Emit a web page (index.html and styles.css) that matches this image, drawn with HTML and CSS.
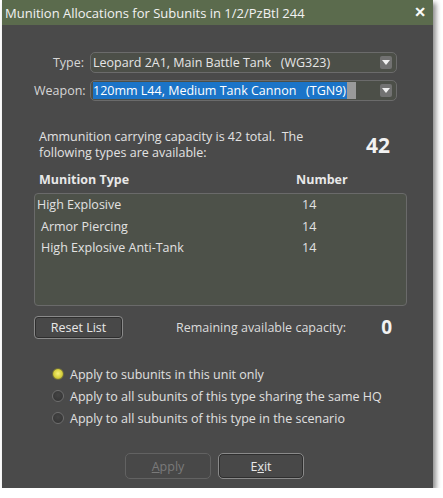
FILE: index.html
```html
<!DOCTYPE html>
<html>
<head>
<meta charset="utf-8">
<link rel="stylesheet" href="styles.css">
</head>
<body>
<div class="dialog">
  <div class="titlebar">
    <span class="title">Munition Allocations for Subunits in 1/2/PzBtl 244</span>
    <span class="close">✕</span>
  </div>
  <div class="content">
    <div class="fields">
      <label class="flabel">Type:</label>
      <div class="combo">
        <span class="cval">Leopard 2A1, Main Battle Tank &nbsp;&nbsp;(WG323)</span>
        <span class="dbtn"><svg width="8" height="5" viewBox="0 0 8 5"><path d="M0 0H8L4 5Z" fill="#f0f0f0"/></svg></span>
      </div>
      <label class="flabel">Weapon:</label>
      <div class="combo">
        <span class="cval sel">120mm L44, Medium Tank Cannon &nbsp;&nbsp;(TGN9)</span><span class="caret"></span>
        <span class="dbtn"><svg width="8" height="5" viewBox="0 0 8 5"><path d="M0 0H8L4 5Z" fill="#f0f0f0"/></svg></span>
      </div>
    </div>

    <div class="capacity">
      <p class="captext">Ammunition carrying capacity is 42 total.&nbsp; The following types are available:</p>
      <span class="bignum">42</span>
    </div>

    <div class="listhead">
      <span class="colname">Munition Type</span>
      <span class="colnum">Number</span>
    </div>
    <div class="listbox">
      <div class="row first"><span class="rname">High Explosive</span><span class="rnum">14</span></div>
      <div class="row"><span class="rname">Armor Piercing</span><span class="rnum">14</span></div>
      <div class="row"><span class="rname">High Explosive Anti-Tank</span><span class="rnum">14</span></div>
    </div>

    <div class="remain">
      <button class="btn reset">Reset List</button>
      <span class="remlabel">Remaining available capacity:</span>
      <span class="zero">0</span>
    </div>

    <div class="radios">
      <div class="radio"><span class="dot on"></span><span>Apply to subunits in this unit only</span></div>
      <div class="radio"><span class="dot"></span><span>Apply to all subunits of this type sharing the same HQ</span></div>
      <div class="radio"><span class="dot"></span><span>Apply to all subunits of this type in the scenario</span></div>
    </div>

    <div class="actions">
      <button class="btn big disabled"><u>A</u>pply</button>
      <button class="btn big">E<u>x</u>it</button>
    </div>
  </div>
</div>
</body>
</html>
```

FILE: styles.css
```css
html, body {
  margin: 0;
  padding: 0;
  background: #ffffff;
}
body {
  padding: 0 0 0 2px;
  font-family: "Open Sans", "DejaVu Sans", sans-serif;
  font-size: 12px;
  color: #e2e2e2;
}
.dialog {
  width: 431px;
  height: 488px;
  background: #4a4a4a;
  box-shadow: 3px 3px 5px rgba(0,0,0,0.45);
  display: flex;
  flex-direction: column;
}
.titlebar {
  height: 25px;
  background: #5b6b4d;
  display: flex;
  align-items: center;
  justify-content: space-between;
  padding: 0 7px 0 3px;
}
.title {
  font-size: 13px;
  color: #f2f2f2;
}
.close {
  font-size: 14px;
  font-weight: bold;
  color: #ffffff;
  margin-top: -3px;
  -webkit-text-stroke: 0.6px #ffffff;
}
.content {
  padding: 27px 26px 0 32px;
  display: flex;
  flex-direction: column;
}
.fields {
  display: grid;
  grid-template-columns: 50px 1fr;
  column-gap: 6px;
  row-gap: 7px;
  align-items: center;
}
.flabel {
  text-align: right;
  font-size: 12.5px;
  color: #d6d6d6;
}
.combo {
  height: 19px;
  border: 1px solid #6b6b6b;
  border-radius: 5px;
  background: #4c4f48;
  display: flex;
  align-items: center;
  padding-left: 2px;
  padding-right: 4px;
  margin-right: 10px;
}
.cval {
  font-size: 12.5px;
  color: #e6e6e6;
  white-space: nowrap;
  line-height: 17px;
}
.cval.sel {
  background: #1b74c8;
  color: #ffffff;
  padding-right: 1px;
}
.caret {
  width: 9px;
  height: 17px;
  background: #9a9a9a;
}
.dbtn {
  margin-left: auto;
  width: 12px;
  height: 13px;
  border-radius: 2px;
  background: #727272;
  display: flex;
  align-items: center;
  justify-content: center;
}
.capacity {
  margin-top: 28px;
  display: flex;
  align-items: center;
  padding-left: 5px;
}
.captext {
  margin: 0;
  width: 270px;
  font-size: 12.5px;
  line-height: 16px;
}
.bignum {
  margin-left: auto;
  margin-right: 17px;
  font-size: 21px;
  font-weight: bold;
  color: #f2f2f2;
}
.listhead {
  margin-top: 10px;
  display: flex;
  padding-left: 5px;
  font-weight: bold;
  font-size: 12.5px;
  color: #e8e8e8;
}
.colname { width: 257px; }
.listbox {
  margin-top: 5px;
  height: 113px;
  border: 1px solid #6a6a6a;
  border-radius: 4px;
  background: #4d5149;
  padding-top: 0;
  box-sizing: border-box;
}
.row {
  display: flex;
  height: 21.5px;
  align-items: center;
  font-size: 12.5px;
  padding-left: 6px;
}
.row.first { padding-left: 2px; }
.rname { width: 261px; }
.row.first .rname { width: 265px; }
.remain {
  margin-top: 8px;
  display: flex;
  align-items: center;
}
.btn {
  font-family: "Open Sans", "DejaVu Sans", sans-serif;
  font-size: 12.5px;
  color: #e8e8e8;
  background: #484848;
  border: 1px solid #8a8a8a;
  border-radius: 4px;
  box-shadow: inset 0 0 0 1px #2e2e2e;
  padding: 0;
}
.reset {
  width: 89px;
  height: 23px;
}
.remlabel {
  margin-left: 53px;
  font-size: 12.5px;
  color: #dcdcdc;
}
.zero {
  margin-left: auto;
  margin-right: 15px;
  font-size: 19px;
  font-weight: bold;
  color: #f2f2f2;
}
.radios {
  margin-top: 26px;
  padding-left: 18px;
  display: flex;
  flex-direction: column;
  gap: 6px;
}
.radio {
  display: flex;
  align-items: center;
  gap: 6px;
  font-size: 12.5px;
  height: 16px;
  color: #e0e0e0;
}
.dot {
  width: 10px;
  height: 10px;
  border-radius: 50%;
  background: radial-gradient(circle at 50% 40%, #444444, #323232);
  border: 1px solid #6e6e6e;
}
.dot.on {
  background: radial-gradient(circle at 50% 45%, #f5f07a 0%, #d6cf3c 55%, #8f8a2a 100%);
  border-color: #6c6a3a;
}
.actions {
  margin-top: 27px;
  display: flex;
  gap: 7px;
  padding-left: 91px;
}
.big {
  width: 86px;
  height: 26px;
  border-radius: 5px;
}
.btn.disabled {
  color: #7a7a7a;
  border-color: #626262;
  box-shadow: none;
}
```
